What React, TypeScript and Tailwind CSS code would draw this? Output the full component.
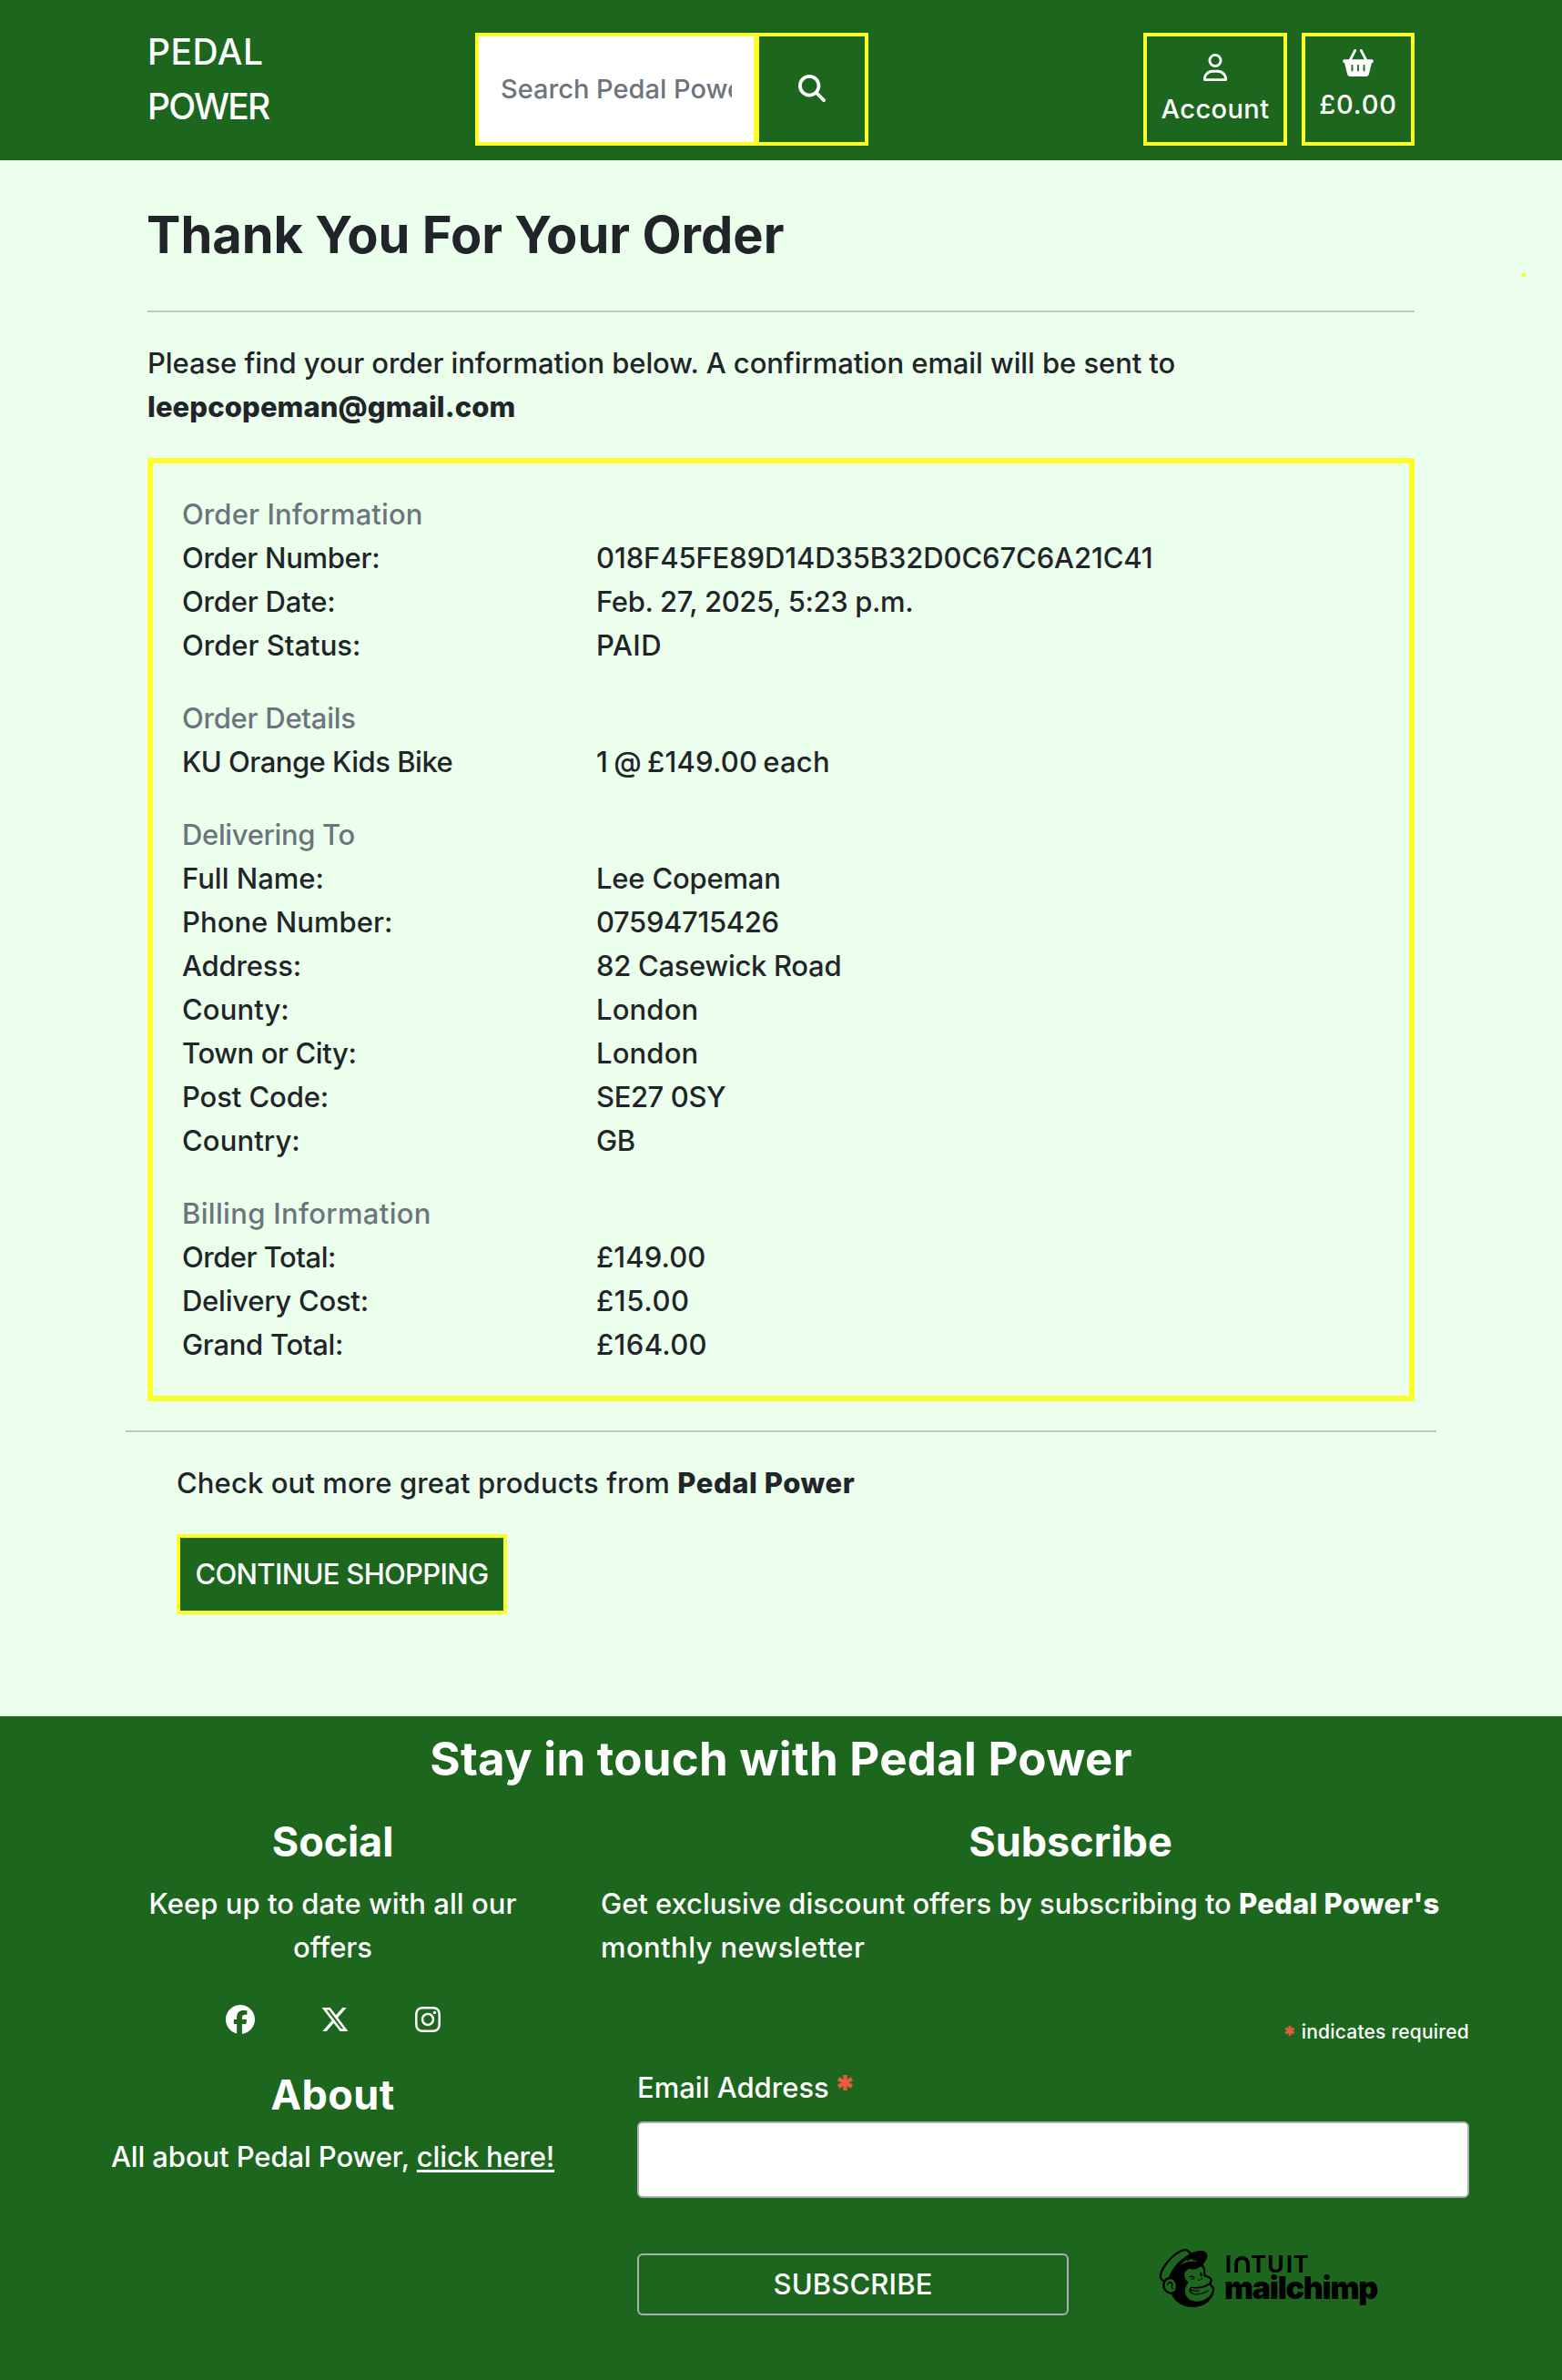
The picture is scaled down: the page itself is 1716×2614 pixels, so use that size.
import type { ReactNode } from "react";
import {
  FaFacebook,
  FaInstagram,
  FaMagnifyingGlass,
  FaBasketShopping,
  FaRegUser,
  FaXTwitter,
} from "react-icons/fa6";
import { SiMailchimp } from "react-icons/si";

type Entry = { label: string; value: string; l?: string; v?: string };
type Group = { title: string; t: string; rows: Entry[] };

const groups: Group[] = [
  {
    title: "Order Information",
    t: "tracking-[0.1px]",
    rows: [
      { label: "Order Number:", l: "tracking-[-0.3px]", value: "018F45FE89D14D35B32D0C67C6A21C41", v: "tracking-[-0.12px]" },
      { label: "Order Date:", l: "tracking-[-0.2px]", value: "Feb. 27, 2025, 5:23 p.m.", v: "tracking-[-0.36px]" },
      { label: "Order Status:", l: "tracking-[0px]", value: "PAID", v: "tracking-[0.4px]" },
    ],
  },
  {
    title: "Order Details",
    t: "tracking-[-0.25px]",
    rows: [{ label: "KU Orange Kids Bike", l: "tracking-[-0.5px]", value: "1 @ £149.00 each", v: "tracking-[0.2px] [word-spacing:-2.3px]" }],
  },
  {
    title: "Delivering To",
    t: "tracking-[-0.35px]",
    rows: [
      { label: "Full Name:", l: "tracking-[0px]", value: "Lee Copeman", v: "tracking-[-0.2px]" },
      { label: "Phone Number:", l: "tracking-[0.05px]", value: "07594715426", v: "tracking-[-0.35px]" },
      { label: "Address:", l: "tracking-[-0.2px]", value: "82 Casewick Road", v: "tracking-[-0.3px]" },
      { label: "County:", l: "tracking-[0.1px]", value: "London", v: "tracking-[0.15px]" },
      { label: "Town or City:", l: "tracking-[-0.4px]", value: "London", v: "tracking-[0.15px]" },
      { label: "Post Code:", l: "tracking-[-0.1px]", value: "SE27 0SY", v: "tracking-[-0.4px]" },
      { label: "Country:", l: "tracking-[0.1px]", value: "GB", v: "tracking-[-0.5px]" },
    ],
  },
  {
    title: "Billing Information",
    t: "tracking-[0.32px]",
    rows: [
      { label: "Order Total:", l: "tracking-[-0.5px]", value: "£149.00", v: "tracking-[0.1px]" },
      { label: "Delivery Cost:", l: "tracking-[-0.25px]", value: "£15.00", v: "tracking-[0.6px]" },
      { label: "Grand Total:", l: "tracking-[-0.3px]", value: "£164.00", v: "tracking-[0.35px]" },
    ],
  },
];

function Header() {
  return (
    <header className="h-[176px] bg-[#1d661d] px-[162px] pt-9 text-white">
      <div className="flex items-start">
        <a className="-mt-[9px] w-[360px] text-[39px] leading-[60px]">
          <span className="block tracking-[0.5px]">PEDAL</span>
          <span className="block tracking-[-1.8px]">POWER</span>
        </a>
        <form className="flex h-[124px]">
          <input
            className="w-[310px] border-4 border-[#fdfd29] bg-white px-6 text-[29px] tracking-[0px] text-[#212529] outline-none placeholder:text-[#6c757d] placeholder:opacity-100"
            placeholder="Search Pedal Power"
          />
          <button
            type="button"
            aria-label="Search"
            className="-ml-[2px] flex w-[124px] items-center justify-center border-4 border-[#fdfd29] pb-[2px]"
          >
            <FaMagnifyingGlass size={30} />
          </button>
        </form>
        <nav className="ml-auto flex gap-4 text-[29px] leading-[45px]">
          <a className="flex h-[124px] w-[158px] flex-col items-center gap-2 border-4 border-[#fdfd29] pt-[19px]">
            <FaRegUser size={30} />
            <span className="tracking-[0.4px]">Account</span>
          </a>
          <a className="flex h-[124px] w-[124px] flex-col items-center gap-2 border-4 border-[#fdfd29] pt-[14px]">
            <FaBasketShopping className="h-[30px] w-[34px]" />
            <span className="tracking-[0.8px]">£0.00</span>
          </a>
        </nav>
      </div>
    </header>
  );
}

function FooterHeading({ className, children }: { className: string; children: ReactNode }) {
  return <h4 className={`text-center text-[45px] leading-[54px] font-bold ${className}`}>{children}</h4>;
}

function MailchimpLogo() {
  return (
    <div className="flex text-black">
      <SiMailchimp size={64} />
      <div className="ml-[11px] pt-1">
        <div className="flex text-[25px] leading-[26px] font-bold">
          <span className="flex w-[5px] justify-center">I</span>
          <span className="mt-[4px] ml-1 flex h-[18px] w-[17px] justify-center rounded-t-full border-4 border-b-0 border-black text-[8px] leading-[12px] text-transparent">
            N
          </span>
          <span className="ml-[2px] flex w-[15px] justify-center">T</span>
          <span className="ml-[3px] flex w-[17px] justify-center">U</span>
          <span className="ml-1 flex w-[5px] justify-center">I</span>
          <span className="ml-[2px] flex w-[16px] justify-center">T</span>
        </div>
        <div className="-ml-[2px] text-[34px] leading-[25px] font-black tracking-[-1.25px]">mailchimp</div>
      </div>
    </div>
  );
}

function Footer() {
  return (
    <footer className="h-[729px] bg-[#1d661d] pt-4 text-white">
      <h3 className="text-center text-[51px] leading-[61px] font-bold tracking-[0.25px]">
        Stay in touch with Pedal Power
      </h3>
      <div className="mt-[34px] flex pl-[95px]">
        <div className="w-[541px] px-6">
          <FooterHeading className="tracking-[-0.1px]">Social</FooterHeading>
          <p className="mt-[17px] text-center">
            <span className="tracking-[0.05px]">Keep up to date with all our</span>
            <br />
            <span>offers</span>
          </p>
          <div className="mt-[31px] ml-px flex h-12 items-center justify-center gap-[72px]">
            <FaFacebook size={32} />
            <FaXTwitter size={32} />
            <FaInstagram className="h-8 w-7" />
          </div>
          <FooterHeading className="mt-8 tracking-[0.4px]">About</FooterHeading>
          <p className="mt-[17px] text-center whitespace-nowrap">
            <span className="tracking-[-0.1px]">All about Pedal Power, </span>
            <a className="tracking-[-0.15px] underline decoration-[3px] underline-offset-[3px]">click here!</a>
          </p>
        </div>
        <div className="w-[1080px] px-6">
          <FooterHeading className="tracking-[0px]">Subscribe</FooterHeading>
          <p className="mt-[17px]">
            <span className="tracking-[-0.04px]">Get exclusive discount offers by subscribing to </span>
            <strong className="font-extrabold tracking-[0.25px]">Pedal Power's</strong>
            <br />
            <span className="tracking-[0.4px]">monthly newsletter</span>
          </p>
          <form className="mt-[52px] ml-10 w-[914px]">
            <div className="flex h-[33px] justify-end text-[21px] leading-[33px] tracking-[0.2px]">
              <span className="mt-[3px] mr-[5px] text-[26px] leading-[33px] font-black text-[#e85c41]">*</span>
              <span>indicates required</span>
            </div>
            <label className="mt-[21px] flex h-12">
              <span>Email Address</span>
              <span className="mt-[1px] ml-[5px] text-[41px] leading-[48px] font-black text-[#e85c41]">*</span>
            </label>
            <input className="mt-[13px] block h-[84px] w-full rounded-[6px] border-2 border-[#abb0b2] bg-white" />
            <div className="mt-14 flex">
              <button
                type="button"
                className="mt-[5px] h-[68px] w-[474px] rounded-[6px] border-2 border-[#abb0b2] tracking-[0.15px]"
              >
                SUBSCRIBE
              </button>
              <div className="ml-[98px]">
                <MailchimpLogo />
              </div>
            </div>
          </form>
        </div>
      </div>
    </footer>
  );
}

export default function App() {
  return (
    <div className="relative min-h-[2614px] w-[1716px] overflow-hidden bg-[#ecffec] font-['Inter',sans-serif] text-[31px] leading-[48px] font-[460] text-[#212529]">
      <Header />
      <span className="absolute top-[300px] left-[1672px] size-1 bg-[#fdfd29]" />
      <main className="mx-[138px] h-[1709px] pt-12">
        <section className="px-6">
          <h1 className="-ml-px text-[56px] leading-[69px] font-bold tracking-[0px]">Thank You For Your Order</h1>
          <hr className="mt-12 border-t-2 border-[#b9c9ba]" />
          <p className="mt-8">
            <span className="tracking-[-0.08px]">
              Please find your order information below. A confirmation email will be sent to
            </span>
            <br />
            <strong className="font-extrabold tracking-[0.1px]">leepcopeman@gmail.com</strong>
          </p>
          <div className="mt-8 flex flex-col gap-8 border-[6px] border-[#fdfd29] p-8">
            {groups.map((g) => (
              <div key={g.title}>
                <div className={`text-[#6c757d] ${g.t}`}>{g.title}</div>
                {g.rows.map((r) => (
                  <div key={r.label} className="flex">
                    <div className={`w-[455px] ${r.l ?? ""}`}>{r.label}</div>
                    <div className={r.v}>{r.value}</div>
                  </div>
                ))}
              </div>
            ))}
          </div>
        </section>
        <hr className="mt-8 border-t-2 border-[#b9c9ba]" />
        <section className="mt-8 px-14">
          <p>
            <span className="tracking-[0.1px]">Check out more great products from </span>
            <strong className="font-extrabold tracking-[0.55px]">Pedal Power</strong>
          </p>
          <button
            type="button"
            className="mt-8 flex h-[88px] w-[363px] items-center justify-center border-4 border-[#fdfd29] bg-[#1d661d] tracking-[-0.68px] text-white"
          >
            CONTINUE SHOPPING
          </button>
        </section>
      </main>
      <Footer />
    </div>
  );
}
